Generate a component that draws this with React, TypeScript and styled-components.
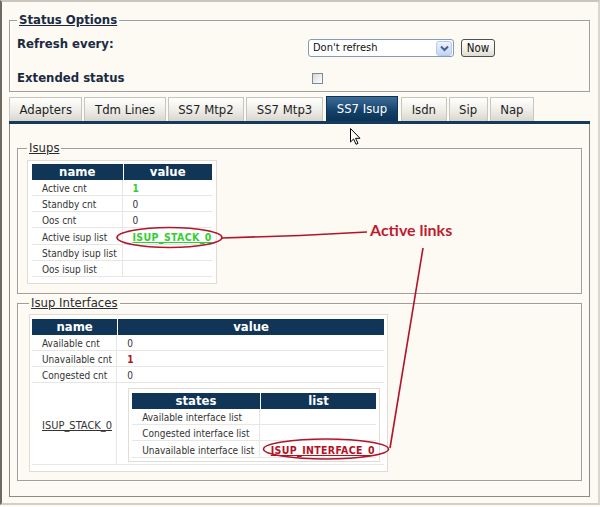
import React from "react";
import styled, { createGlobalStyle } from "styled-components";

const UI_FONT = `"DejaVu Sans Condensed", "DejaVu Sans", sans-serif`;

const GlobalStyle = createGlobalStyle`
  html, body { margin: 0; padding: 0; background: #fcfaf3; }
  body { font-family: ${UI_FONT}; color: #222; }
  * { box-sizing: border-box; }
`;

const Frame = styled.div`
  position: relative;
  width: 600px;
  height: 505px;
  border-style: solid;
  border-width: 2px;
  border-color: #c9c6bf #d9d6cf #d2cfc8 #6e6a63;
  padding: 10px 8px 0 7px;
  background: #fcfaf3;
  overflow: hidden;
`;

const Group = styled.fieldset<{ $pad: string; $mt?: number }>`
  margin: ${(p) => p.$mt ?? 0}px 0 0 0;
  padding: ${(p) => p.$pad};
  border: 1px solid #a19e97;
  box-shadow: inset 1px 1px 0 #ffffff, 1px 1px 0 #ffffff;
  min-width: 0;
`;

const Legend = styled.legend<{ $strong?: boolean }>`
  padding: 0 2px;
  font-size: 13px;
  font-weight: ${(p) => (p.$strong ? 700 : 400)};
  line-height: 16px;
  text-decoration: underline;
  color: ${(p) => (p.$strong ? "#1b2a42" : "#2b2b2b")};
`;

const OptionRow = styled.div<{ $h: number; $mt?: number }>`
  display: grid;
  grid-template-columns: 291px auto;
  align-items: start;
  height: ${(p) => p.$h}px;
  margin-top: ${(p) => p.$mt ?? 0}px;
`;

const OptionLabel = styled.div`
  font-size: 13px;
  font-weight: 700;
  line-height: 16px;
  color: #1b2a42;
`;

const Controls = styled.div`
  display: flex;
  align-items: center;
  gap: 7px;
  margin-top: 3px;
`;

const SelectBox = styled.div`
  display: flex;
  align-items: center;
  justify-content: space-between;
  width: 146px;
  height: 18px;
  border: 1px solid #7f9db9;
  border-radius: 3px;
  background: #ffffff;
  padding: 0 1px 0 4px;
`;

const SelectText = styled.span`
  font-size: 11px;
  line-height: 14px;
  color: #111;
`;

const SelectArrow = styled.span`
  display: flex;
  align-items: center;
  justify-content: center;
  width: 16px;
  height: 15px;
  border: 1px solid #b7c9ef;
  border-radius: 3px;
  background: linear-gradient(#eef3ff, #c3d4f8);
`;

const NowButton = styled.button`
  width: 34px;
  height: 18px;
  padding: 0;
  border: 1px solid #4f4f4f;
  border-radius: 3px;
  background: linear-gradient(#ffffff, #f1efe6 60%, #dedbd0);
  font-family: ${UI_FONT};
  font-size: 11.5px;
  line-height: 14px;
  color: #111;
`;

const CheckBox = styled.span`
  display: block;
  width: 11px;
  height: 11px;
  margin: 3px 0 0 4px;
  border: 1px solid #7c8a9c;
  background: linear-gradient(135deg, #d9d8d2, #ffffff);
`;

const TabBar = styled.div`
  display: flex;
  align-items: flex-end;
  gap: 2px;
  height: 25px;
  margin-top: 4px;
`;

const Tab = styled.div<{ $active?: boolean }>`
  display: flex;
  align-items: center;
  height: ${(p) => (p.$active ? 25 : 24)}px;
  padding: 0 ${(p) => (p.$active ? 10 : 9.5)}px;
  margin-left: ${(p) => (p.$active ? 1 : 0)}px;
  margin-right: ${(p) => (p.$active ? 1 : 0)}px;
  border: 1px solid ${(p) => (p.$active ? "#0d3356" : "#c8c5bd")};
  border-bottom: none;
  background: ${(p) =>
    p.$active
      ? "linear-gradient(#3d6d95, #134068 60%, #0c3256)"
      : "linear-gradient(#ffffff, #eeece6 55%, #d8d6cf)"};
  color: ${(p) => (p.$active ? "#ffffff" : "#1e1e1e")};
  font-size: 13px;
  line-height: 16px;
  white-space: nowrap;
`;

const TabLine = styled.div`
  height: 3px;
  background: #153a5c;
`;

const Panel = styled.div`
  border: 1px solid #8e8b85;
  border-top: none;
  padding: 16px 7px 15px 7px;
`;

const TableBox = styled.div<{ $pad: string }>`
  width: fit-content;
  border: 1px solid #dfddd6;
  background: #ffffff;
  padding: ${(p) => p.$pad};
`;

const Table = styled.table<{ $w: number }>`
  width: ${(p) => p.$w}px;
  table-layout: fixed;
  border-collapse: separate;
  border-spacing: 0;
`;

const Th = styled.th<{ $w: number }>`
  width: ${(p) => p.$w}px;
  height: 16px;
  padding: 0;
  background: #103556;
  color: #ffffff;
  font-size: 13px;
  font-weight: 700;
  line-height: 16px;
  text-align: center;
  & + & {
    border-left: 1px solid #ffffff;
  }
`;

const Td = styled.td<{ $top?: boolean; $pad?: string }>`
  height: 16px;
  padding: ${(p) => p.$pad ?? "3px 0 0 10px"};
  border-bottom: 1px solid #e8e6e0;
  font-size: 10px;
  line-height: 12px;
  color: #333;
  white-space: nowrap;
  vertical-align: ${(p) => (p.$top ? "top" : "middle")};
  &:first-child {
    border-right: 1px solid #e8e6e0;
  }
`;

const Value = styled.span<{ $tone: "green" | "red" }>`
  font-weight: 700;
  color: ${(p) => (p.$tone === "green" ? "#2fcf2f" : "#b3121f")};
`;

const LinkText = styled.span<{ $tone?: "green" | "red" }>`
  font-size: ${(p) => (p.$tone ? "10.5px" : "11px")};
  font-weight: ${(p) => (p.$tone ? 700 : 400)};
  letter-spacing: ${(p) => (p.$tone ? "0.35px" : "0")};
  text-decoration: underline;
  color: ${(p) =>
    p.$tone === "green" ? "#2fcf2f" : p.$tone === "red" ? "#b3121f" : "#333"};
`;

const Overlay = styled.div`
  position: absolute;
  top: -2px;
  left: -2px;
  width: 600px;
  height: 507px;
  pointer-events: none;
`;

const OverlaySvg = styled.svg`
  display: block;
  width: 600px;
  height: 507px;
`;

const Callout = styled.span`
  position: absolute;
  left: 370px;
  top: 222px;
  font-family: Lato, "Open Sans", sans-serif;
  font-size: 16px;
  font-weight: 700;
  line-height: 16px;
  color: #c01a30;
  white-space: nowrap;
`;

const TABS = ["Adapters", "Tdm Lines", "SS7 Mtp2", "SS7 Mtp3", "SS7 Isup", "Isdn", "Sip", "Nap"];

const ISUP_ROWS: { name: string; value?: React.ReactNode }[] = [
  { name: "Active cnt", value: <Value $tone="green">1</Value> },
  { name: "Standby cnt", value: "0" },
  { name: "Oos cnt", value: "0" },
  { name: "Active isup list", value: <LinkText $tone="green">ISUP_STACK_0</LinkText> },
  { name: "Standby isup list" },
  { name: "Oos isup list" },
];

const IFACE_ROWS: { name: string; value: React.ReactNode }[] = [
  { name: "Available cnt", value: "0" },
  { name: "Unavailable cnt", value: <Value $tone="red">1</Value> },
  { name: "Congested cnt", value: "0" },
];

const STATE_ROWS: { name: string; value?: React.ReactNode }[] = [
  { name: "Available interface list" },
  { name: "Congested interface list" },
  { name: "Unavailable interface list", value: <LinkText $tone="red">ISUP_INTERFACE_0</LinkText> },
];

export default function App() {
  return (
    <>
      <GlobalStyle />
      <Frame>
        <Group $pad="8px 7px 5px 7px">
          <Legend $strong>Status Options</Legend>
          <OptionRow $h={21}>
            <OptionLabel>Refresh every:</OptionLabel>
            <Controls>
              <SelectBox>
                <SelectText>Don't refresh</SelectText>
                <SelectArrow>
                  <svg width="9" height="7" viewBox="0 0 9 7">
                    <path d="M1 1.5 L4.5 5 L8 1.5" fill="none" stroke="#4a5f8c" strokeWidth="2" />
                  </svg>
                </SelectArrow>
              </SelectBox>
              <NowButton>Now</NowButton>
            </Controls>
          </OptionRow>
          <OptionRow $h={16} $mt={13}>
            <OptionLabel>Extended status</OptionLabel>
            <CheckBox />
          </OptionRow>
        </Group>

        <TabBar>
          {TABS.map((t) => (
            <Tab key={t} $active={t === "SS7 Isup"}>
              {t}
            </Tab>
          ))}
        </TabBar>
        <TabLine />

        <Panel>
          <Group $pad="4px 8px 9px 9px">
            <Legend>Isups</Legend>
            <TableBox $pad="3px 4px 6px 4px">
              <Table $w={180}>
                <thead>
                  <tr>
                    <Th $w={90}>name</Th>
                    <Th $w={89}>value</Th>
                  </tr>
                </thead>
                <tbody>
                  {ISUP_ROWS.map((r) => (
                    <tr key={r.name}>
                      <Td>{r.name}</Td>
                      <Td>{r.value}</Td>
                    </tr>
                  ))}
                </tbody>
              </Table>
            </TableBox>
          </Group>

          <Group $pad="3px 8px 8px 11px" $mt={1}>
            <Legend>Isup Interfaces</Legend>
            <TableBox $pad="4px 3px 6px 2px">
              <Table $w={352}>
                <thead>
                  <tr>
                    <Th $w={85}>name</Th>
                    <Th $w={266}>value</Th>
                  </tr>
                </thead>
                <tbody>
                  {IFACE_ROWS.map((r) => (
                    <tr key={r.name}>
                      <Td>{r.name}</Td>
                      <Td>{r.value}</Td>
                    </tr>
                  ))}
                  <tr>
                    <Td $pad="4px 0 0 10px">
                      <LinkText>ISUP_STACK_0</LinkText>
                    </Td>
                    <Td $top $pad="5px 0 2px 11px">
                      <TableBox $pad="4px 3px 3px 3px">
                        <Table $w={244}>
                          <thead>
                            <tr>
                              <Th $w={127}>states</Th>
                              <Th $w={116}>list</Th>
                            </tr>
                          </thead>
                          <tbody>
                            {STATE_ROWS.map((r) => (
                              <tr key={r.name}>
                                <Td>{r.name}</Td>
                                <Td $pad="3px 0 0 11px">{r.value}</Td>
                              </tr>
                            ))}
                          </tbody>
                        </Table>
                      </TableBox>
                    </Td>
                  </tr>
                </tbody>
              </Table>
            </TableBox>
          </Group>
        </Panel>

        <Overlay>
          <OverlaySvg viewBox="0 0 600 507">
            <g fill="none" stroke="#b3142b" strokeWidth="1.6">
              <ellipse cx="169.5" cy="237.5" rx="52.5" ry="10" />
              <path d="M222 238 L300 235.5 L367 232" />
              <ellipse cx="326" cy="449" rx="62.5" ry="10" />
              <path d="M423 248 L390 448" />
            </g>
            <path
              d="M350.5 128.5 V142 L353.6 139 L356 144.3 L358 143.4 L355.6 138.3 H360 Z"
              fill="#ffffff"
              stroke="#000000"
              strokeWidth="1"
              strokeLinejoin="round"
            />
          </OverlaySvg>
          <Callout>Active links</Callout>
        </Overlay>
      </Frame>
    </>
  );
}
